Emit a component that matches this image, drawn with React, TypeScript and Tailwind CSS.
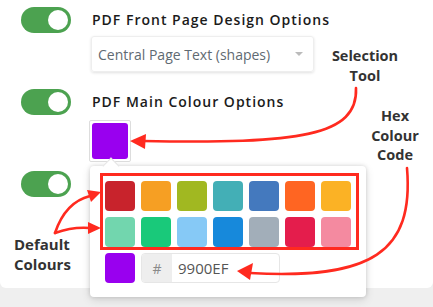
const swatches = [
  "#c8232c",
  "#f69f23",
  "#a1b821",
  "#43afb6",
  "#4479be",
  "#ff6522",
  "#fbb225",
  "#72d6ae",
  "#19c97a",
  "#86c9f6",
  "#1789db",
  "#a2aeb9",
  "#e41d4c",
  "#f48aa0",
];

function Toggle() {
  return (
    <div className="flex h-[26px] w-[50px] items-center justify-end rounded-full bg-[#4ca250] px-[3px]">
      <div className="h-[20px] w-[20px] rounded-full bg-white" />
    </div>
  );
}

function Title({ children }: { children: React.ReactNode }) {
  return (
    <div className="pl-[2px] text-[14px] font-semibold leading-[26px] tracking-[1px] text-[#1b1b1b]">
      {children}
    </div>
  );
}

export default function App() {
  return (
    <div
      className="relative h-[307px] w-[433px] overflow-hidden bg-[#efefef]"
      style={{ fontFamily: '"Open Sans", "Liberation Sans", sans-serif' }}
    >
      {/* Settings card */}
      <div className="h-[288px] rounded-b-[6px] bg-white pl-[21px] pt-[7px]">
        <div className="flex gap-[19px]">
          <div className="flex flex-col gap-[56px]">
            <Toggle />
            <Toggle />
            <Toggle />
          </div>
          <div className="flex flex-col">
            <Title>PDF Front Page Design Options</Title>
            <div className="ml-[1px] mt-[3px] flex h-[36px] w-[223px] items-center justify-between rounded-[3px] border border-[#eeeeee] pl-[6px] pr-[10px] shadow-[0_1px_3px_rgba(0,0,0,0.12)]">
              <span className="text-[14px] text-[#5f6a72]">Central Page Text (shapes)</span>
              <span className="h-0 w-0 border-x-[4px] border-t-[4px] border-x-transparent border-t-[#bbbbbb]" />
            </div>
            <div className="mt-[17px]">
              <Title>PDF Main Colour Options</Title>
            </div>
            <div className="-ml-[1px] mt-[5px] h-[42px] w-[42px] rounded-[2px] border border-[#dddddd] p-[2px]">
              <div className="h-full w-full rounded-[3px] bg-[#9900ef]" />
            </div>
          </div>
        </div>
      </div>

      {/* Colour picker popup */}
      <div className="absolute left-[90px] top-[166px] w-[276px] rounded-[4px] bg-white px-[15px] pb-[14px] pt-[15px] shadow-[0_0_4px_rgba(0,0,0,0.15),0_3px_10px_rgba(0,0,0,0.12)]">
        <div className="absolute -top-[6px] left-[15px] h-[12px] w-[12px] rotate-45 border-l border-t border-[#e4e4e4] bg-white" />
        <div className="grid grid-cols-7 gap-[6px]">
          {swatches.map((c) => (
            <div key={c} className="h-[30px] w-[30px] rounded-[4px]" style={{ background: c }} />
          ))}
        </div>
        <div className="mt-[6px] flex gap-[6px]">
          <div className="h-[30px] w-[30px] rounded-[4px] bg-[#9900ef]" />
          <div className="flex h-[30px] w-[139px] overflow-hidden rounded-[4px] border border-[#e6e6e6]">
            <div className="flex w-[30px] items-center justify-center bg-[#eeeeee] text-[14px] text-[#8a8a8a]">#</div>
            <div className="flex items-center pl-[6px] text-[15px] text-[#555555]">9900EF</div>
          </div>
        </div>
      </div>

      {/* Annotation: box around default colours */}
      <div className="absolute left-[100px] top-[173px] h-[77px] w-[259px] border-[3px] border-[#ff2a1f]" />

      {/* Annotation labels */}
      <div className="absolute left-[325px] top-[46px] w-[80px] text-center text-[14.5px] font-bold leading-[19.5px] text-[#333333]">
        Selection
        <br />
        Tool
      </div>
      <div className="absolute left-[355px] top-[106px] w-[80px] text-center text-[14.5px] font-bold leading-[19.5px] text-[#333333]">
        Hex
        <br />
        Colour
        <br />
        Code
      </div>
      <div className="absolute left-[14px] top-[234px] text-[15px] font-bold leading-[20px] text-[#333333]">
        Default
        <br />
        Colours
      </div>

      {/* Annotation arrows */}
      <svg className="absolute left-0 top-0" width="433" height="307" viewBox="0 0 433 307">
        <g fill="none" stroke="#ff2a1f" strokeWidth="2.6" strokeLinecap="round">
          <path d="M356 88 C358 136 300 144 143 141" />
          <path d="M407 168 C414 252 372 280 250 273" />
          <path d="M55 233 C62 212 74 200 90 196" />
          <path d="M55 233 C66 229 78 227 90 228" />
        </g>
        <g fill="#ff2a1f">
          <polygon points="130,141 146,134 145,149" />
          <polygon points="237,271 253,263 250,280" />
          <polygon points="101,192 87,190 91,202" />
          <polygon points="101,228 88,222 88,234" />
        </g>
      </svg>
    </div>
  );
}
